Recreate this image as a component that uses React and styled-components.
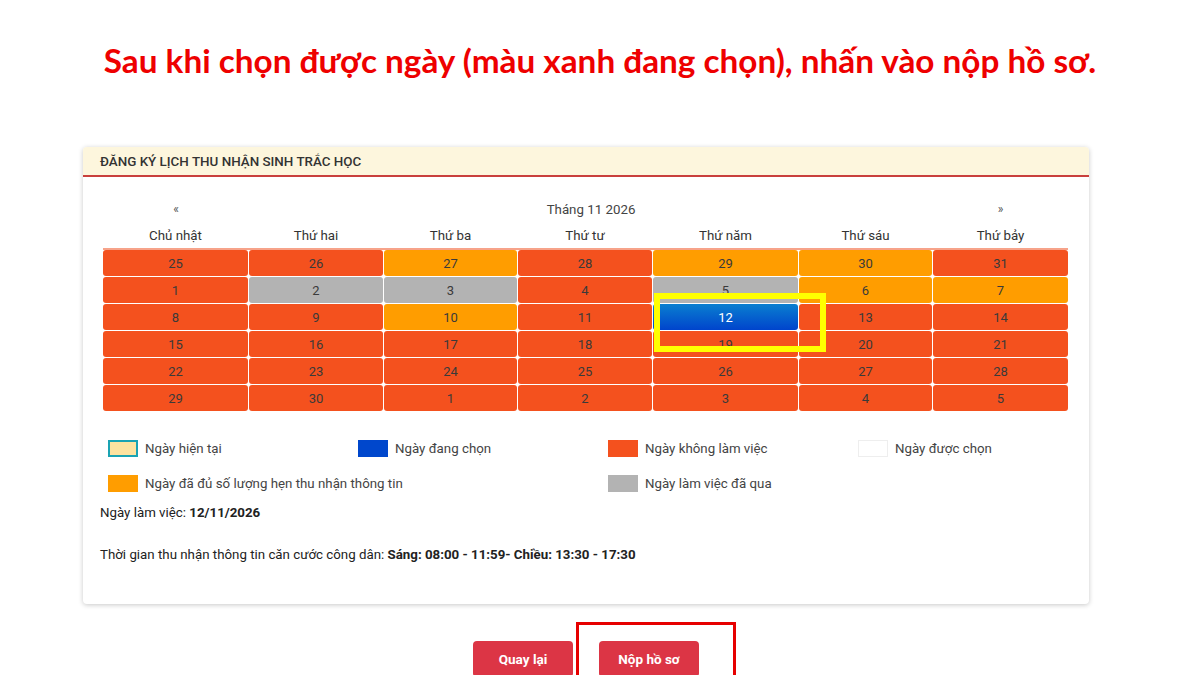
import React from 'react';
import styled, { createGlobalStyle } from 'styled-components';

const GlobalStyle = createGlobalStyle`
    html, body {
        margin: 0;
        padding: 0;
        background: #fff;
    }
    body {
        font-family: Roboto, "Noto Sans", "Liberation Sans", sans-serif;
        color: #333;
    }
`;

const C = {
    off: '#f4511e',
    full: '#ff9d00',
    past: '#b3b3b3',
    free: '#ffffff',
};

const Page = styled.div`
    width: 1200px;
    height: 675px;
    overflow: hidden;
    display: flex;
    flex-direction: column;
`;

const Title = styled.h1`
    margin: 38px 0 0;
    height: 44px;
    text-align: center;
    font-family: Lato, "Open Sans", sans-serif;
    font-weight: 700;
    font-size: 33.3px;
    line-height: 44px;
    color: #ee0000;
`;

const Content = styled.div`
    width: 1006px;
    margin: 65px 0 0 83px;
    display: flex;
    flex-direction: column;
`;

const Card = styled.section`
    background: #fff;
    border-radius: 4px;
    box-shadow: 0 1px 5px rgba(0,0,0,0.22);
    overflow: hidden;
`;

const CardHeader = styled.div`
    height: 28px;
    display: flex;
    align-items: center;
    padding: 0 17px;
    background: #fdf6dd;
    border-bottom: 2px solid #c9403d;
    font-size: 13.4px;
    font-weight: 500;
    color: #333;
`;

const CardBody = styled.div`
    padding: 19px 21px 42px 20px;
`;

const COLS = '145px 134px 133px 134px 145px 133px 135px';

const NavRow = styled.div`
    display: grid;
    grid-template-columns: 146px 684px 135px;
    height: 26px;
    align-items: center;
    text-align: center;
    font-size: 13.3px;
    color: #444;
`;

const Arrow = styled.span`
    font-size: 12px;
    color: #555;
`;

const DayNames = styled.div`
    display: grid;
    grid-template-columns: ${COLS};
    column-gap: 1px;
    height: 26px;
    align-items: center;
    text-align: center;
    font-size: 13.3px;
    color: #333;
    border-bottom: 2px solid #f7a38a;
`;

const Grid = styled.div`
    position: relative;
    display: grid;
    grid-template-columns: ${COLS};
    grid-auto-rows: 26px;
    gap: 1px;
    background: #fff;
`;

const Cell = styled.div`
    display: flex;
    align-items: center;
    justify-content: center;
    border-radius: 3px;
    font-size: 13px;
    color: ${p => (p.$kind === 'sel' ? '#fff' : '#3a3a3a')};
    background: ${p => (p.$kind === 'sel'
        ? 'linear-gradient(to bottom, #0a7fd0, #0044cc)'
        : C[p.$kind])};
`;

const Highlight = styled.div`
    position: absolute;
    left: 551px;
    top: 43px;
    width: 160px;
    height: 47px;
    border: 6px solid #ffff00;
    pointer-events: none;
`;

const Legend = styled.div`
    display: grid;
    grid-template-columns: repeat(4, 250px);
    row-gap: 18px;
    margin: 29px 0 0 5px;
`;

const LegendItem = styled.div`
    display: flex;
    align-items: center;
    gap: 7px;
    height: 17px;
    font-size: 13.3px;
    color: #444;
    white-space: nowrap;
`;

const Swatch = styled.span`
    flex-shrink: 0;
    display: inline-block;
    box-sizing: border-box;
    width: 30px;
    height: 17px;
    background: ${p => p.$bg};
    border: ${p => p.$border || 'none'};
`;

const Info = styled.p`
    margin: ${p => p.$mt}px 0 0 -3px;
    font-size: 13.3px;
    color: #222;
    b { font-weight: 700; }
`;

const Actions = styled.div`
    position: relative;
    display: flex;
    justify-content: center;
    gap: 26px;
    margin-top: 37px;
`;

const Button = styled.button`
    width: 100px;
    height: 36px;
    border: none;
    border-radius: 4px;
    background: #dc3545;
    color: #fff;
    font-family: Roboto, sans-serif;
    font-size: 13.5px;
    font-weight: 700;
    cursor: pointer;
`;

const RedFrame = styled.div`
    position: absolute;
    left: 493px;
    top: -19px;
    width: 154px;
    height: 80px;
    border: 3px solid #e60000;
    pointer-events: none;
`;

const rows = [
    [[25, 'off'], [26, 'off'], [27, 'full'], [28, 'off'], [29, 'full'], [30, 'full'], [31, 'off']],
    [[1, 'off'], [2, 'past'], [3, 'past'], [4, 'off'], [5, 'past'], [6, 'full'], [7, 'full']],
    [[8, 'off'], [9, 'off'], [10, 'full'], [11, 'off'], [12, 'sel'], [13, 'off'], [14, 'off']],
    [[15, 'off'], [16, 'off'], [17, 'off'], [18, 'off'], [19, 'off'], [20, 'off'], [21, 'off']],
    [[22, 'off'], [23, 'off'], [24, 'off'], [25, 'off'], [26, 'off'], [27, 'off'], [28, 'off']],
    [[29, 'off'], [30, 'off'], [1, 'off'], [2, 'off'], [3, 'off'], [4, 'off'], [5, 'off']],
];

const days = ['Chủ nhật', 'Thứ hai', 'Thứ ba', 'Thứ tư', 'Thứ năm', 'Thứ sáu', 'Thứ bảy'];

const legend = [
    { label: 'Ngày hiện tại', bg: '#fde3a0', border: '2px solid #1aa3b3' },
    { label: 'Ngày đang chọn', bg: '#0047cc' },
    { label: 'Ngày không làm việc', bg: '#f4511e' },
    { label: 'Ngày được chọn', bg: '#fff', border: '1px solid #eee' },
    { label: 'Ngày đã đủ số lượng hẹn thu nhận thông tin', bg: '#ff9d00' },
    { label: '', empty: true },
    { label: 'Ngày làm việc đã qua', bg: '#b3b3b3' },
];

const App = () => {
    return (
        <>
            <GlobalStyle />
            <Page>
                <Title>Sau khi chọn được ngày (màu xanh đang chọn), nhấn vào nộp hồ sơ.</Title>
                <Content>
                    <Card>
                        <CardHeader>ĐĂNG KÝ LỊCH THU NHẬN SINH TRẮC HỌC</CardHeader>
                        <CardBody>
                            <NavRow>
                                <Arrow>«</Arrow>
                                <span>Tháng 11 2026</span>
                                <Arrow>»</Arrow>
                            </NavRow>
                            <DayNames>
                                {days.map(d => <span key={d}>{d}</span>)}
                            </DayNames>
                            <Grid>
                                {rows.flat().map(([n, kind], idx) =>
                                    <Cell key={idx} $kind={kind}>{n}</Cell>
                                )}
                                <Highlight />
                            </Grid>
                            <Legend>
                                {legend.map((item, idx) =>
                                    item.empty
                                        ? <span key={idx} />
                                        : <LegendItem key={idx}>
                                            <Swatch $bg={item.bg} $border={item.border} />
                                            <span>{item.label}</span>
                                        </LegendItem>
                                )}
                            </Legend>
                            <Info $mt={13}>Ngày làm việc: <b>12/11/2026</b></Info>
                            <Info $mt={27}>Thời gian thu nhận thông tin căn cước công dân: <b>Sáng: 08:00 - 11:59- Chiều: 13:30 - 17:30</b></Info>
                        </CardBody>
                    </Card>
                    <Actions>
                        <Button>Quay lại</Button>
                        <Button>Nộp hồ sơ</Button>
                        <RedFrame />
                    </Actions>
                </Content>
            </Page>
        </>
    );
}

export default App;
